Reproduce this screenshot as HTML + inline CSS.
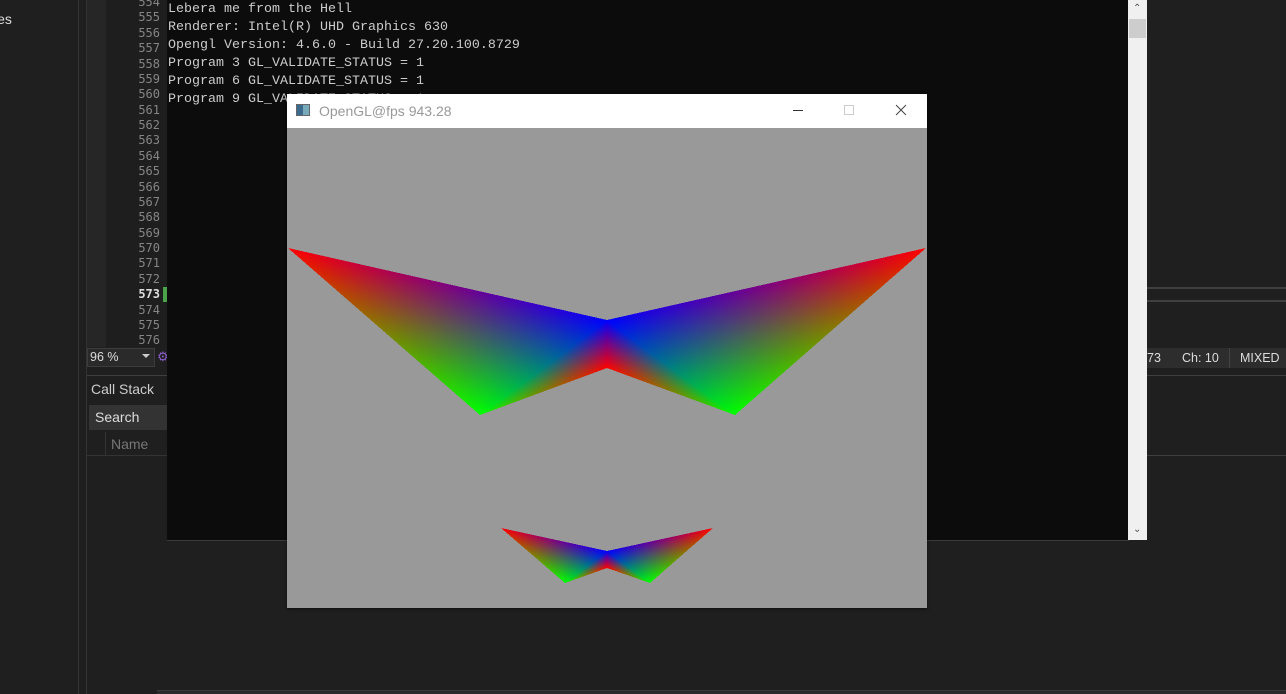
<!DOCTYPE html>
<html><head><meta charset="utf-8">
<style>
*{margin:0;padding:0;box-sizing:border-box}
html,body{width:1286px;height:694px;overflow:hidden;background:#1f1f1f;font-family:"Liberation Sans",sans-serif}
.abs{position:absolute}
.mono{font-family:"DejaVu Sans Mono","Liberation Mono",monospace}
</style></head><body>
<div class="abs" style="left:0;top:11px;color:#ddd;font-size:14px;left:-6px">ies</div>
<div class="abs" style="left:78px;top:0;width:1px;height:694px;background:#333"></div>
<div class="abs" style="left:86px;top:0;width:1px;height:694px;background:#333"></div>
<div class="abs" style="left:87px;top:0;width:19px;height:347px;background:#262626"></div>
<div class="abs" style="left:106px;top:0;width:61px;height:347px;background:#1e1e1e"></div>
<div id="ln" class="abs mono" style="left:106px;top:-5px;width:54px;text-align:right;color:#858585;font-size:12px;line-height:15.38px"></div>
<div class="abs" style="left:163px;top:287px;width:4px;height:15px;background:#4aa54a"></div>
<div class="abs" style="left:87px;top:348px;width:68px;height:19px;background:#2a2a2a;border:1px solid #3c3c3c;color:#ddd;font-size:12.5px;padding:1px 2px">96 %<span style="position:absolute;right:4px;top:5px;border:4px solid transparent;border-top:4px solid #ccc"></span></div>
<div class="abs" style="left:157px;top:349px;width:10px;height:17px;color:#8a5cc7;font-size:13px">⚙</div>
<div class="abs" style="left:1147px;top:348px;width:139px;height:20px;background:#2d2d2d;color:#ddd;font-size:12.5px;line-height:20px"><span style="position:absolute;left:0">73</span><span style="position:absolute;left:35px">Ch: 10</span><span style="position:absolute;left:82px;top:0;width:1px;height:20px;background:#444"></span><span style="position:absolute;left:93px">MIXED</span></div>
<div class="abs" style="left:1147px;top:287px;width:139px;height:2px;background:#3f3f3f"></div>
<div class="abs" style="left:1147px;top:300px;width:139px;height:2px;background:#3f3f3f"></div>
<div class="abs" style="left:1147px;top:375px;width:139px;height:1px;background:#3f3f3f"></div>
<div class="abs" style="left:1147px;top:455px;width:139px;height:1px;background:#3f3f3f"></div>
<div class="abs" style="left:87px;top:375px;width:80px;height:1px;background:#3f3f3f"></div>
<div class="abs" style="left:91px;top:381px;color:#ccc;font-size:14px">Call Stack</div>
<div class="abs" style="left:89px;top:405px;width:78px;height:25px;background:#333;color:#ddd;font-size:14px;padding:4px 6px">Search</div>
<div class="abs" style="left:105px;top:432px;width:1px;height:24px;background:#333"></div>
<div class="abs" style="left:111px;top:436px;color:#777;font-size:14px">Name</div>
<div class="abs" style="left:87px;top:455px;width:80px;height:1px;background:#333"></div>
<div class="abs" style="left:157px;top:690px;width:1129px;height:4px;background:#2a2a2a;border-top:1px solid #3a3a3a"></div>
<div class="abs" style="left:167px;top:0;width:962px;height:540px;background:#0c0c0c;box-shadow:0 1px 0 #3a3a3a"></div>
<div class="abs" style="left:168px;top:1px;color:#ccc;font-size:13.33px;line-height:18px;white-space:pre;font-family:'Liberation Mono',monospace">Lebera me from the Hell
Renderer: Intel(R) UHD Graphics 630
Opengl Version: 4.6.0 - Build 27.20.100.8729
Program 3 GL_VALIDATE_STATUS = 1
Program 6 GL_VALIDATE_STATUS = 1
Program 9 GL_VALIDATE_STATUS = 1</div>
<div class="abs" style="left:1128px;top:0;width:19px;height:540px;background:#f0f0f0"></div>
<div class="abs" style="left:1129px;top:19px;width:17px;height:19px;background:#cdcdcd"></div>
<div class="abs" style="left:1133px;top:3px;color:#555;font-size:10px">⌃</div>
<div class="abs" style="left:1133px;top:524px;color:#555;font-size:10px">⌄</div>
<div class="abs" style="left:287px;top:94px;width:640px;height:514px;background:#999;box-shadow:0 1px 3px rgba(0,0,0,.6)">
 <div style="height:34px;background:#fff;position:relative">
  <div style="position:absolute;left:9px;top:10px;width:14px;height:12px;border:1px solid #666;background:linear-gradient(90deg,#3d6b8e 50%,#7ab 50%)"></div>
  <div style="position:absolute;left:32px;top:9px;color:#999;font-size:14px">OpenGL@fps 943.28</div>
  <div style="position:absolute;left:506px;top:16px;width:10px;height:1px;background:#333"></div>
  <div style="position:absolute;left:557px;top:11px;width:10px;height:10px;border:1px solid #ccc"></div>
  <svg style="position:absolute;left:608px;top:10px" width="12" height="12"><path d="M1 1L11 11M11 1L1 11" stroke="#444" stroke-width="1"/></svg>
 </div>
</div>
<svg id="sv" class="abs" style="left:0;top:0" width="1286" height="694" shape-rendering="crispEdges"></svg>
<script>
var ln='';for(var i=554;i<=576;i++)ln+=(i==573?'<b style="color:#ddd">'+i+'</b>':i)+'<br>';document.getElementById('ln').innerHTML=ln;
var R=[255,0,0],G=[0,255,0],B=[0,0,255];
var s='',defs='',id=0;
function tri(p){
 var pts=p.map(q=>q[0]+','+q[1]).join(' ');
 var out='<g style="isolation:isolate"><polygon points="'+pts+'" fill="#000"/>';
 for(var k=0;k<3;k++){var A=p[k],Bq=p[(k+1)%3],C=p[(k+2)%3];
  var dx=C[0]-Bq[0],dy=C[1]-Bq[1],t=((A[0]-Bq[0])*dx+(A[1]-Bq[1])*dy)/(dx*dx+dy*dy);
  var fx=Bq[0]+t*dx,fy=Bq[1]+t*dy;var c='rgb('+A[2].join(',')+')';
  defs+='<linearGradient id="g'+id+'" gradientUnits="userSpaceOnUse" x1="'+A[0]+'" y1="'+A[1]+'" x2="'+fx+'" y2="'+fy+'"><stop offset="0" stop-color="'+c+'"/><stop offset="1" stop-color="#000"/></linearGradient>';
  out+='<polygon points="'+pts+'" fill="url(#g'+id+')" style="mix-blend-mode:plus-lighter"/>';id++;}
 return out+'</g>';}
function wing(O,Bt,C,D){return tri([[O[0],O[1],R],[C[0],C[1],B],[Bt[0],Bt[1],G]])+tri([[C[0],C[1],B],[D[0],D[1],R],[Bt[0],Bt[1],G]]);}
s+=wing([288,248],[480,415],[607,320],[607,368]);
s+=wing([926,248],[735,415],[607,320],[607,368]);
s+=wing([501,528],[565,583],[607,551],[607,568]);
s+=wing([713,528],[650,583],[607,551],[607,568]);
document.getElementById('sv').innerHTML='<defs>'+defs+'</defs>'+s;
</script>
</body></html>
